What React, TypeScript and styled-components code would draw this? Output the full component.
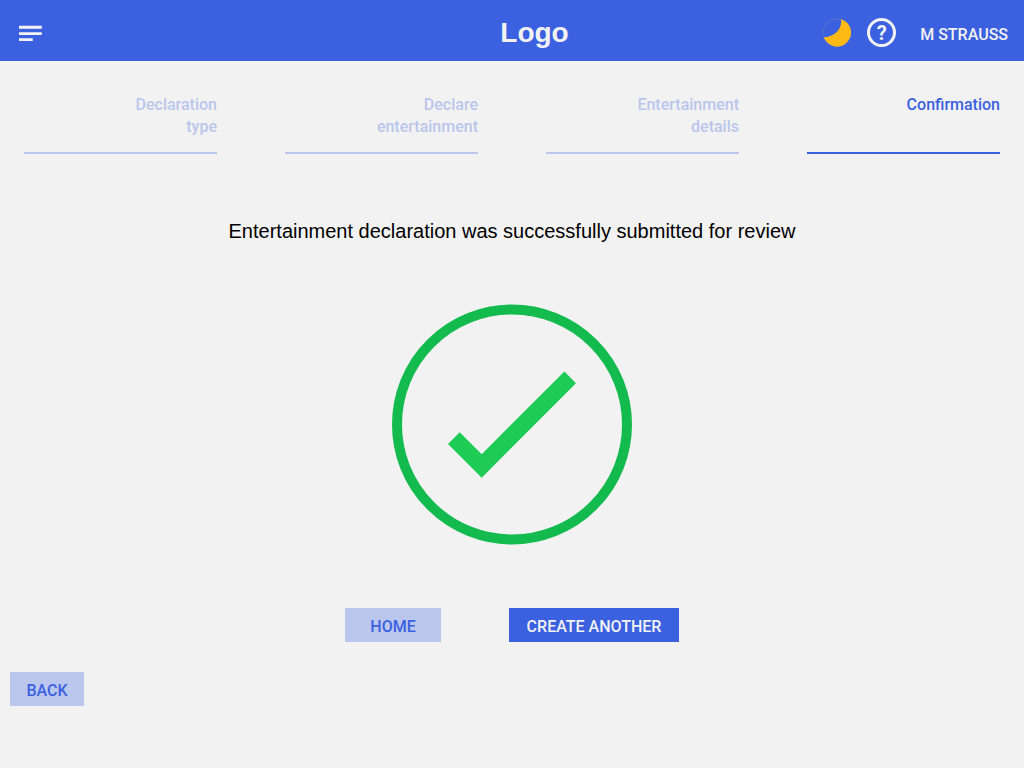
import React from 'react';
import styled, { createGlobalStyle } from 'styled-components';

const blue = '#3b61e1';
const paleBlue = '#bac6ec';
const pale = '#f2f2f2';

const GlobalStyle = createGlobalStyle`
  *, *::before, *::after { box-sizing: border-box; }
  body {
    margin: 0;
    background: ${pale};
    color: #000;
    font-family: Roboto, "Liberation Sans", sans-serif;
    font-size: 16px;
    line-height: 22px;
  }
`;

const Header = styled.header`
  display: grid;
  grid-template-columns: 1fr auto 1fr;
  align-items: center;
  height: 61px;
  padding: 0 16px;
  background: ${blue};
  color: ${pale};
`;

const IconButton = styled.button`
  display: flex;
  justify-self: start;
  align-items: center;
  justify-content: center;
  padding: 0;
  border: 0;
  background: none;
  color: inherit;
  font: inherit;
  cursor: pointer;
`;

const Logo = styled.div`
  padding: 4px 0 0 45px;
  font-family: "Liberation Sans", Arial, sans-serif;
  font-size: 28px;
  font-weight: 700;
  line-height: 32px;
`;

const Tools = styled.div`
  display: flex;
  align-items: center;
  justify-content: flex-end;
  gap: 16px;
  padding-top: 4px;
`;

const HelpButton = styled(IconButton)`
  width: 29px;
  height: 29px;
  border: 3px solid ${pale};
  border-radius: 50%;
  font-size: 20px;
  font-weight: 700;
`;

const UserName = styled.span`
  padding: 4px 0 0 8px;
  font-weight: 500;
`;

const Steps = styled.ol`
  display: grid;
  grid-template-columns: repeat(4, 1fr);
  gap: 68px;
  margin: 0;
  padding: 33px 24px 0;
  list-style: none;
`;

const Step = styled.li<{ $current?: boolean }>`
  display: flex;
  justify-content: flex-end;
  height: 60px;
  border-bottom: 2px solid ${(p) => (p.$current ? blue : paleBlue)};
  color: ${(p) => (p.$current ? blue : paleBlue)};
  font-weight: 500;
  text-align: right;
`;

const StepLabel = styled.span`
  max-width: 108px;
`;

const Result = styled.main`
  display: flex;
  flex-direction: column;
  align-items: center;
  padding-top: 64px;
`;

const Message = styled.h1`
  margin: 0 0 60px;
  font-family: "Liberation Sans", Arial, sans-serif;
  font-size: 20px;
  font-weight: 400;
  line-height: 26px;
`;

const Actions = styled.div`
  display: flex;
  gap: 68px;
  margin-top: 63px;
`;

const Button = styled.button<{ $primary?: boolean }>`
  min-width: 74px;
  height: 34px;
  padding: 3px 16px 0;
  border: 0;
  background: ${(p) => (p.$primary ? blue : paleBlue)};
  color: ${(p) => (p.$primary ? pale : blue)};
  font: inherit;
  font-weight: 500;
  cursor: pointer;
`;

const HomeButton = styled(Button)`
  min-width: 96px;
`;

const CreateButton = styled(Button)`
  min-width: 170px;
`;

const Footer = styled.footer`
  padding: 30px 10px;
`;

const steps = ['Declaration type', 'Declare entertainment', 'Entertainment details', 'Confirmation'];

const MenuIcon = () => (
  <svg width="30" height="30" viewBox="0 0 30 30" fill={pale} aria-hidden="true">
    <path d="M3 9.8h22.8v2.9H3zM3 16.2h22.8v2.7H3zM3 22.3h13.8V25H3z" />
  </svg>
);

const MoonIcon = () => (
  <svg width="28" height="30" viewBox="0 0 28 30" aria-hidden="true">
    <circle cx="14" cy="14.6" r="13.8" fill="none" stroke="#8a8f9c" strokeWidth="0.4" />
    <path d="M18 1.2A14 14 0 1 1 .8 19.2C10 19.1 19.5 12.1 18 1.2z" fill="#ffb914" />
  </svg>
);

const SuccessIcon = () => (
  <svg width="240" height="241" viewBox="0 0 240 241" role="img" aria-label="Success">
    <circle cx="120" cy="120.5" r="115" fill="none" stroke="#13bb4e" strokeWidth="10" />
    <path d="M67.7 128.3L89.7 150.2L172.4 67.4L184 79.3L89.7 173.7L56 140z" fill="#1ecc55" />
  </svg>
);

export default function App() {
  return (
    <>
      <GlobalStyle />
      <Header>
        <IconButton type="button" aria-label="Menu">
          <MenuIcon />
        </IconButton>
        <Logo>Logo</Logo>
        <Tools>
          <IconButton type="button" aria-label="Dark mode">
            <MoonIcon />
          </IconButton>
          <HelpButton type="button" aria-label="Help">?</HelpButton>
          <UserName>M STRAUSS</UserName>
        </Tools>
      </Header>
      <Steps>
        {steps.map((label, i) => {
          const current = i === steps.length - 1;
          return (
            <Step key={label} $current={current} aria-current={current ? 'step' : undefined}>
              <StepLabel>{label}</StepLabel>
            </Step>
          );
        })}
      </Steps>
      <Result>
        <Message>Entertainment declaration was successfully submitted for review</Message>
        <SuccessIcon />
        <Actions>
          <HomeButton type="button">HOME</HomeButton>
          <CreateButton type="button" $primary>CREATE ANOTHER</CreateButton>
        </Actions>
      </Result>
      <Footer>
        <Button type="button">BACK</Button>
      </Footer>
    </>
  );
}
